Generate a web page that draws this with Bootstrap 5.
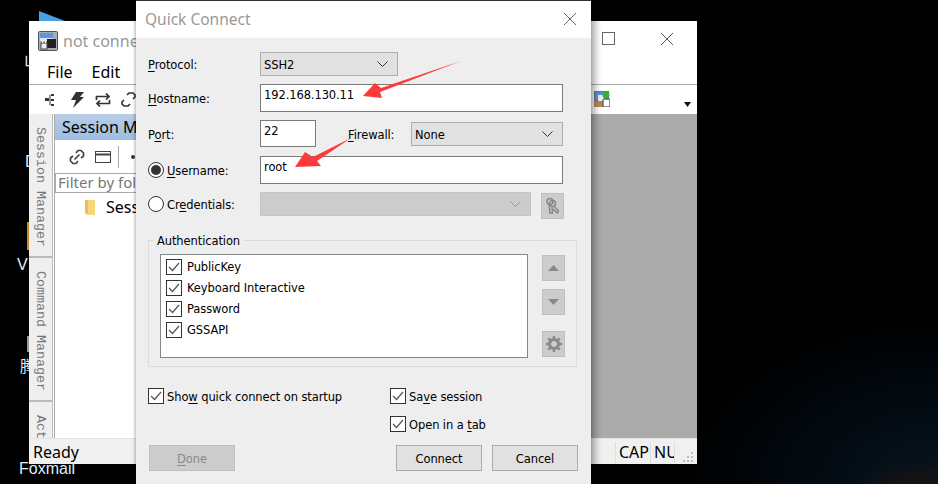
<!DOCTYPE html>
<html lang="en">
<head>
<meta charset="utf-8">
<title>Quick Connect</title>
<link href="https://cdn.jsdelivr.net/npm/bootstrap@5.3.0/dist/css/bootstrap.min.css" rel="stylesheet">
<style>
html,body{height:100%;margin:0;overflow:hidden}
body{background:radial-gradient(ellipse 70px 24px at 925px 484px,#1a1412 0%,rgba(26,20,18,0) 100%),radial-gradient(ellipse 260px 170px at 938px 484px,#06141e 0%,#02080e 60%,#000 100%),#000;font-family:"DejaVu Sans","Liberation Sans",sans-serif;position:relative;color:#000}
.desk-label{position:absolute;color:#dff0ff;font-family:"Liberation Sans","Noto Sans CJK SC",sans-serif;font-size:16px;line-height:18px}
.desk-bit{position:absolute}
.main-win{position:absolute;left:29px;top:21px;width:668px;height:443px;background:#fff;display:flex;flex-direction:column;font-family:"Noto Sans","Liberation Sans",sans-serif}
.main-title{height:39px;display:flex;align-items:center;flex:none;padding-left:9px;gap:5px;color:#999;font-size:16px;position:relative}
.main-menu{height:25px;flex:none;display:flex;align-items:center;padding-left:18px;gap:19px;font-size:16px;border-bottom:1px solid #aaa}
.main-tools{height:29px;flex:none;display:flex;align-items:center;padding-left:16px;position:relative}
.main-tools svg{flex:none}
.main-mid{flex:1;display:flex;min-height:0}
.side-tabs{width:24px;background:#efefef;flex:none;border-right:1px solid #bbb;display:flex;flex-direction:column;overflow:hidden}
.side-tab{writing-mode:vertical-rl;font-family:"Liberation Mono",monospace;font-size:13.33px;line-height:23px;color:#777;border-bottom:2px solid #bbb;padding-top:13px;white-space:nowrap;flex:none;height:144px}
.sess-panel{width:82px;flex:none;margin-left:1px;border-left:1px solid #aaa;overflow:hidden;white-space:nowrap;background:#fff}
.sess-head{height:26px;background:linear-gradient(#b8cde6,#9dbde2);font-size:16px;line-height:27px;padding-left:7px}
.sess-tools{height:33px;display:flex;align-items:center;padding-left:14px}
.sess-tools svg,.sess-tools span,.sess-tree svg{flex:none}
.sess-filter{height:20px;margin-right:-10px;border:1px solid #aaa;color:#777;font-size:15px;line-height:17px;padding-left:2px}
.sess-tree{display:flex;align-items:center;padding-left:29px;gap:10px;font-size:16px;margin-top:2px}
.gray-area{flex:1;background:#ababab}
.status{height:26px;flex:none;background:#f0f0f0;font-size:16px;display:flex;align-items:center;padding-left:4px;position:relative;border-top:1px solid #e4e4e4}
.status-cell{position:absolute;top:3px;height:21px;line-height:21px;border-left:1px solid #ddd;padding-left:3px;overflow:hidden}
.status-cell.last-cell{border-right:1px solid #ddd}
.qc{position:absolute;left:136px;top:0;width:455px;height:484px;background:#eee;border-top:1px solid #333;box-shadow:4px 0 7px rgba(0,0,0,.35),-1px 0 3px rgba(0,0,0,.25);font-size:11.5px;letter-spacing:-.1px}
.qc-title{height:37px;background:#fff;display:flex;align-items:center;justify-content:space-between;padding:1px 14px 0 9px;font-family:"Noto Sans",sans-serif;font-size:15.5px;color:#999;letter-spacing:0}
.qc-title svg{margin-top:-2px}
.qc-body{padding:14px 14px 0 12px}
.qc-row{display:flex;align-items:center}
.qc-lab{width:112px;flex:none;line-height:15px;padding-top:2px}
.qc-lab.low-lab{padding-top:4px}
.qc-fw{width:95px;padding:4px 0 0 32px;flex:none}
.qc-radio-lab{display:flex;align-items:center;gap:3px;padding-top:0}
.qc-radio-lab>span:last-child{padding-top:2px}
.radio-dot{width:16px;height:16px;border-radius:50%;border:1px solid #333;background:#fff;flex:none;display:flex;align-items:center;justify-content:center}
.radio-dot i{width:10px;height:10px;border-radius:50%;background:#333;display:block}
.fld{border:1px solid #7a7a7a;background:#fff;padding:0 3px 4px;display:flex;align-items:center}
.pick{border:1px solid #adadad;background:#e1e1e1;display:flex;align-items:center;justify-content:space-between;padding:0 9px 0 3px}
.pick span{padding-top:4px}
.pick.off{background:#ccc;border-color:#c4c4c4}
.sq-btn{width:23px;height:26px;background:#ccc;border:1px solid #bfbfbf;display:flex;align-items:center;justify-content:center;flex:none}
.auth-group{width:429px;height:127px;border:1px solid #dcdcdc;margin-top:24px;position:relative;padding:13px 11px 0 11px;display:flex;gap:14px}
.auth-legend{position:absolute;left:4px;top:-7px;background:#eee;padding:0 4px;line-height:15px}
.auth-list{width:368px;height:104px;border:1px solid #82878c;background:#fff;padding:1px 5px}
.auth-item{height:21px;display:flex;align-items:center;gap:5px}
.auth-item>span:last-child{padding-top:2px}
.chk{width:16px;height:16px;border:1px solid #333;background:#fff;flex:none;display:flex;align-items:center;justify-content:center}
.auth-side{display:flex;flex-direction:column}
.opt{display:flex;align-items:center;gap:3px;height:16px;white-space:nowrap}
.opt>span:last-child{padding-top:4px}
.act-btn{height:26px;border:1px solid #adadad;background:#e1e1e1;width:86px;display:flex;align-items:center;justify-content:center;padding-top:3px}
.act-btn.off{background:#ccc;border-color:#bfbfbf;color:#888}
.ul{text-decoration:underline;text-underline-offset:2px}
.arrows{position:absolute;left:0;top:0;pointer-events:none}
</style>
</head>
<body>
<svg class="desk-bit" style="left:39px;top:11px" width="27" height="11" viewBox="0 0 27 11"><polygon points="0,0 26,10 0,10" fill="#4aa0e0"/></svg>
<div class="desk-bit" style="left:27px;top:222px;width:2px;height:28px;background:#c98a2b"></div>
<div class="desk-bit" style="left:27px;top:336px;width:2px;height:16px;background:#999"></div>
<div class="desk-label" style="left:17px;top:256px">V</div>
<div class="desk-label" style="left:20px;top:358px">腾</div>
<div class="desk-label" style="left:24px;top:52px">山</div>
<div class="desk-label" style="left:25px;top:153px">D</div>
<div class="desk-label" style="left:19px;top:460px">Foxmail</div>

<div class="main-win">
  <div class="main-title">
    <svg width="20" height="20" viewBox="0 0 20 20"><rect x=".5" y=".5" width="19" height="19" rx="1" fill="#a7adb3" stroke="#555"/><rect x="2" y="2" width="13" height="5" fill="#5f95e6"/><rect x="2" y="7" width="13" height="3" fill="#dfe6f0"/><rect x="9" y="8" width="9" height="9" fill="#222"/><rect x="3" y="12" width="6" height="6" fill="#eee" stroke="#444"/><path d="M4.500 12V9.500h3V12" fill="none" stroke="#eee"/></svg>
    <span>not connected</span>
    <svg class="desk-bit" style="left:573px;top:11px" width="13" height="13"><rect x=".5" y=".5" width="12" height="12" fill="none" stroke="#666"/></svg>
    <svg class="desk-bit" style="left:631px;top:11px" width="14" height="14"><path d="M1 1l12 12M13 1L1 13" stroke="#555" fill="none"/></svg>
  </div>
  <div class="main-menu"><span>File</span><span>Edit</span></div>
  <div class="main-tools">
    <svg width="11" height="14" viewBox="0 0 11 14"><path d="M0 5h4v3H0zM6 1h3v2H6zM6 6h3v2H6zM6 11h3v2H6z" fill="#333"/><path d="M5 2v10" stroke="#333"/></svg>
    <svg width="13" height="16" style="margin-left:15px" viewBox="0 0 13 16"><path d="M5 0h8L9 5h4L2 16l3-8H0z" fill="#333"/></svg>
    <svg width="16" height="14" style="margin-left:11px" viewBox="0 0 16 14"><path d="M1.500 7V3.500H13M14.500 7v3.500H3M11 .5l3 3-3 3M5 7.500l-3 3 3 3" fill="none" stroke="#333" stroke-width="1.700"/></svg>
    <svg width="15" height="15" style="margin-left:10px" viewBox="0 0 15 15"><path d="M6 3l2-2h4l2 2v2l-2 2M9 12l-2 2H3l-2-2v-2l2-2" fill="none" stroke="#333" stroke-width="1.700"/></svg>
    <svg class="desk-bit" style="left:565px;top:6px" width="16" height="16" viewBox="0 0 16 16"><rect width="15" height="16" fill="#777"/><rect x="1" y="1" width="13" height="8" fill="#5a8fe0"/><rect y="10" width="9" height="6" fill="#b58a5c"/><rect x="4" y="4" width="7" height="6" fill="#eee"/><circle cx="12" cy="4" r="3.500" fill="#2fb52f"/><rect x="9" y="8" width="7" height="8" rx="1" fill="#fff" stroke="#333"/></svg>
    <svg class="desk-bit" style="left:655px;top:17px" width="7" height="5"><polygon points="0,0 7,0 3.500,5" fill="#111"/></svg>
  </div>
  <div class="main-mid">
    <div class="side-tabs">
      <div class="side-tab">Session Manager</div>
      <div class="side-tab">Command Manager</div>
      <div class="side-tab border-0">Active Session</div>
    </div>
    <div class="sess-panel">
      <div class="sess-head">Session Manager</div>
      <div class="sess-tools">
        <svg width="16" height="16" viewBox="0 0 16 16"><path d="M7 4l2-2.500h3l2.500 2.500v3L12 9M9 12l-2 2.500H4L1.500 12V9L4 7M5.500 10.500l5-5" fill="none" stroke="#444" stroke-width="1.700"/></svg>
        <svg width="16" height="12" style="margin-left:10px" viewBox="0 0 16 12"><rect x=".5" y=".5" width="15" height="11" fill="#fff" stroke="#444"/><path d="M1 3.500h14" stroke="#444" stroke-width="2"/></svg>
        <span class="d-inline-block" style="width:1px;height:22px;background:#aaa;margin-left:7px"></span>
        <span class="d-inline-block rounded-circle" style="width:4px;height:4px;background:#333;margin-left:12px"></span>
      </div>
      <div class="sess-filter">Filter by folder</div>
      <div class="sess-tree">
        <svg width="12" height="17" viewBox="0 0 12 17"><path d="M1 1h10v15H3l-2-2z" fill="#f5d67e"/><path d="M1 1h3v13H1z" fill="#e8bf55"/></svg>
        <span>Sessions</span>
      </div>
    </div>
    <div class="gray-area"></div>
  </div>
  <div class="status">Ready
    <span class="status-cell" style="left:586px;width:36px">CAP</span>
    <span class="status-cell last-cell" style="left:621px;width:25px">NUM</span>
    <svg class="desk-bit" style="left:653px;top:12px" width="12" height="12"><path d="M9 1h2v2H9zM5 5h2v2H5zM9 5h2v2H9zM1 9h2v2H1zM5 9h2v2H5zM9 9h2v2H9z" fill="#bbb"/></svg>
  </div>
</div>

<div class="qc">
  <div class="qc-title">
    <span>Quick Connect</span>
    <svg width="14" height="14"><path d="M1 1l12 12M13 1L1 13" stroke="#666" fill="none"/></svg>
  </div>
  <div class="qc-body">
    <div class="qc-row" style="height:24px">
      <span class="qc-lab"><span class="ul">P</span>rotocol:</span>
      <div class="pick" style="width:138px;height:24px"><span>SSH2</span><svg width="11" height="6"><path d="M.5.500l5 5 5-5" fill="none" stroke="#333"/></svg></div>
    </div>
    <div class="qc-row mt-2" style="height:28px">
      <span class="qc-lab"><span class="ul">H</span>ostname:</span>
      <div class="fld" style="width:303px;height:28px">192.168.130.11</div>
    </div>
    <div class="qc-row mt-2" style="height:27px">
      <span class="qc-lab low-lab">P<span class="ul">o</span>rt:</span>
      <div class="fld" style="width:56px;height:27px">22</div>
      <span class="qc-fw"><span class="ul">F</span>irewall:</span>
      <div class="pick" style="width:152px;height:24px"><span>None</span><svg width="11" height="6"><path d="M.5.500l5 5 5-5" fill="none" stroke="#333"/></svg></div>
    </div>
    <div class="qc-row" style="height:28px;margin-top:9px">
      <span class="qc-lab qc-radio-lab"><span class="radio-dot"><i></i></span><span><span class="ul">U</span>sername:</span></span>
      <div class="fld" style="width:303px;height:28px">root</div>
    </div>
    <div class="qc-row mt-2" style="height:24px">
      <span class="qc-lab qc-radio-lab"><span class="radio-dot"></span><span>Cr<span class="ul">e</span>dentials:</span></span>
      <div class="pick off" style="width:271px;height:24px"><span></span><svg width="11" height="6"><path d="M.5.500l5 5 5-5" fill="none" stroke="#999"/></svg></div>
      <div class="sq-btn" style="margin-left:10px;margin-top:3px">
        <svg width="15" height="18" viewBox="0 0 15 18"><circle cx="5" cy="4.500" r="3" fill="none" stroke="#888" stroke-width="1.500"/><circle cx="7.500" cy="6.500" r="3" fill="none" stroke="#888" stroke-width="1.500"/><path d="M4 7.500l1 8.500h2.500l-.5-6M9 9l4.500 5-1 2-4.500-4" fill="none" stroke="#888" stroke-width="1.500"/></svg>
      </div>
    </div>
    <div class="auth-group">
      <span class="auth-legend">Authentication</span>
      <div class="auth-list">
        <div class="auth-item"><span class="chk"><svg width="12" height="10"><path d="M1 5l3.500 3.500L11 1" fill="none" stroke="#555" stroke-width="1.200"/></svg></span><span>PublicKey</span></div>
        <div class="auth-item"><span class="chk"><svg width="12" height="10"><path d="M1 5l3.500 3.500L11 1" fill="none" stroke="#555" stroke-width="1.200"/></svg></span><span>Keyboard Interactive</span></div>
        <div class="auth-item"><span class="chk"><svg width="12" height="10"><path d="M1 5l3.500 3.500L11 1" fill="none" stroke="#555" stroke-width="1.200"/></svg></span><span>Password</span></div>
        <div class="auth-item"><span class="chk"><svg width="12" height="10"><path d="M1 5l3.500 3.500L11 1" fill="none" stroke="#555" stroke-width="1.200"/></svg></span><span>GSSAPI</span></div>
      </div>
      <div class="auth-side">
        <div class="sq-btn" style="margin-top:1px"><svg width="11" height="6"><polygon points="5.500,0 11,6 0,6" fill="#888"/></svg></div>
        <div class="sq-btn" style="margin-top:8px"><svg width="11" height="6"><polygon points="0,0 11,0 5.500,6" fill="#888"/></svg></div>
        <div class="sq-btn" style="margin-top:16px"><svg width="16" height="16" viewBox="0 0 16 16"><circle cx="8" cy="8" r="4.500" fill="none" stroke="#888" stroke-width="3"/><path d="M8 0v3M8 13v3M0 8h3M13 8h3M2.300 2.300l2.100 2.100M11.600 11.600l2.100 2.100M13.700 2.300l-2.100 2.100M4.400 11.600l-2.100 2.100" stroke="#888" stroke-width="2.400"/></svg></div>
      </div>
    </div>
    <div class="d-flex" style="margin-top:21px">
      <div class="opt" style="width:242px"><span class="chk"><svg width="12" height="10"><path d="M1 5l3.500 3.500L11 1" fill="none" stroke="#555" stroke-width="1.200"/></svg></span><span>Sho<span class="ul">w</span> quick connect on startup</span></div>
      <div class="opt"><span class="chk"><svg width="12" height="10"><path d="M1 5l3.500 3.500L11 1" fill="none" stroke="#555" stroke-width="1.200"/></svg></span><span>Sa<span class="ul">v</span>e session</span></div>
    </div>
    <div class="d-flex" style="margin-top:12px;padding-left:242px">
      <div class="opt"><span class="chk"><svg width="12" height="10"><path d="M1 5l3.500 3.500L11 1" fill="none" stroke="#555" stroke-width="1.200"/></svg></span><span>Open in a <span class="ul">t</span>ab</span></div>
    </div>
    <div class="d-flex" style="margin-top:13px;padding-left:1px;width:430px">
      <div class="act-btn off"><span><span class="ul">D</span>one</span></div>
      <div class="act-btn ms-auto">Connect</div>
      <div class="act-btn" style="margin-left:10px">Cancel</div>
    </div>
  </div>
</div>

<svg class="arrows" width="938" height="484" viewBox="0 0 938 484">
  <polygon points="461,61 381,88 375,83 363,96 382,98 380,92" fill="#fb3a3a"/>
  <polygon points="351,138 313,157 305,152 295,167 321,166 317,161" fill="#fb3a3a"/>
</svg>
</body>
</html>
